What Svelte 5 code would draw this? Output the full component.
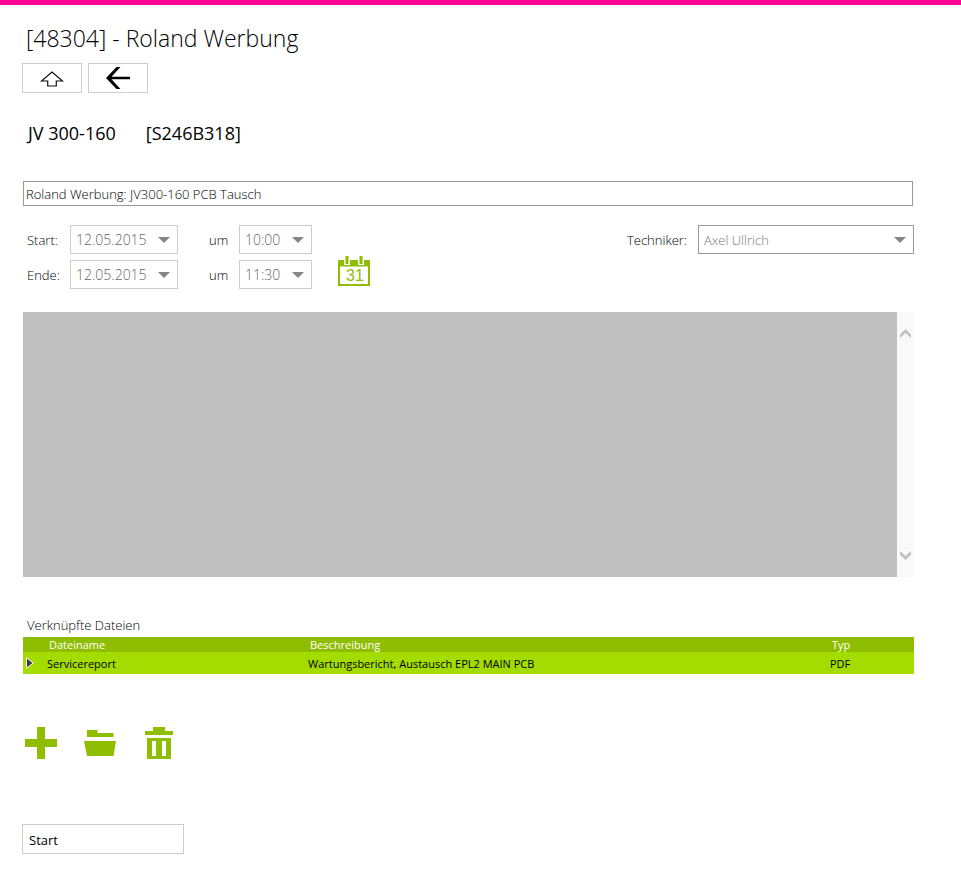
<script>
  const appointment = [
    { id: 'start', label: 'Start:', date: '12.05.2015', time: '10:00' },
    { id: 'end', label: 'Ende:', date: '12.05.2015', time: '11:30' }
  ];
  const files = [
    { name: 'Servicereport', description: 'Wartungsbericht, Austausch EPL2 MAIN PCB', type: 'PDF' }
  ];
  let subject = $state('Roland Werbung: JV300-160 PCB Tausch');
</script>

<main>
  <h1>[48304] - Roland Werbung</h1>

  <nav>
    <button class="box" aria-label="Startseite">
      <svg class="home" width="24" height="16" viewBox="0 0 24 16" fill="none" stroke="#111" stroke-width="1.2">
        <path d="M12 1 L22.500 10 H16.300 V15 H7.700 V10 H1.500 Z" />
      </svg>
    </button>
    <button class="box" aria-label="Zurück">
      <svg width="24" height="22" viewBox="0 0 24 22" fill="#000">
        <path d="M10.500 0 H14.500 L5.500 9.700 H24 V12.300 H5.500 L14.500 22 H10.500 L0 11 Z" />
      </svg>
    </button>
  </nav>

  <h2><span>JV 300-160</span><span>[S246B318]</span></h2>

  <input class="subject" type="text" aria-label="Betreff" bind:value={subject} />

  <section class="details">
    <div class="times">
      {#each appointment as row}
        <div class="row">
          <label class="name" for="{row.id}-date">{row.label}</label>
          <span class="pick date">
            <select id="{row.id}-date" disabled><option>{row.date}</option></select>
          </span>
          <label class="at" for="{row.id}-time">um</label>
          <span class="pick time">
            <select id="{row.id}-time" disabled><option>{row.time}</option></select>
          </span>
        </div>
      {/each}
    </div>
    <button class="calendar" aria-label="Kalender">
      <svg width="32" height="30" viewBox="0 0 32 30">
        <path fill="#8fbe00" fill-rule="evenodd" d="M0 4 H32 V30 H0 Z M2 10.500 V28 H30 V10.500 Z" />
        <path fill="#fff" d="M6 3 H12 V9 H6 Z M20 3 H26 V9 H20 Z" />
        <path fill="#8fbe00" d="M7.500 0 H10.500 V8 H7.500 Z M21.500 0 H24.500 V8 H21.500 Z" />
        <text x="17" y="25" text-anchor="middle" fill="#8fbe00">31</text>
      </svg>
    </button>
    <div class="technician">
      <label for="technician">Techniker:</label>
      <span class="pick person">
        <select id="technician" disabled><option>Axel Ullrich</option></select>
      </span>
    </div>
  </section>

  <div class="notes">
    <textarea aria-label="Notizen" disabled></textarea>
    <div class="scroll">
      <button aria-label="Nach oben">
        <svg width="12" height="9" viewBox="0 0 12 9"><path d="M0 5.500 L5.500 0 L11 5.500 V9 L5.500 4 L0 9 Z" fill="#bfbfbf" /></svg>
      </button>
      <button aria-label="Nach unten">
        <svg width="12" height="9" viewBox="0 0 12 9"><path d="M0 3.500 L5.500 9 L11 3.500 V0 L5.500 5 L0 0 Z" fill="#bfbfbf" /></svg>
      </button>
    </div>
  </div>

  <table>
    <caption>Verknüpfte Dateien</caption>
    <colgroup>
      <col class="mark" />
      <col class="file" />
      <col />
      <col class="type" />
    </colgroup>
    <thead>
      <tr>
        <th></th>
        <th>Dateiname</th>
        <th>Beschreibung</th>
        <th>Typ</th>
      </tr>
    </thead>
    <tbody>
      {#each files as file}
        <tr>
          <td>
            <svg class="pointer" width="8" height="12" viewBox="0 0 8 12"><path d="M0.500 0.800 L7.200 6 L0.500 11.200 Z" fill="#3b3b45" stroke="#fff" /></svg>
          </td>
          <td>{file.name}</td>
          <td>{file.description}</td>
          <td>{file.type}</td>
        </tr>
      {/each}
    </tbody>
  </table>

  <div class="actions">
    <button aria-label="Hinzufügen">
      <svg width="32" height="32" viewBox="0 0 32 32" fill="#8fbe00"><path d="M12 0 H20 V12 H32 V20 H20 V32 H12 V20 H0 V12 H12 Z" /></svg>
    </button>
    <button aria-label="Öffnen">
      <svg width="32" height="32" viewBox="0 0 32 32" fill="#8fbe00"><path d="M3 3 H13.500 V6 H29.500 V10 H3 Z M0 14 H32 L29.500 29 H3 Z" /></svg>
    </button>
    <button aria-label="Löschen">
      <svg width="32" height="32" viewBox="0 0 32 32" fill="#8fbe00" fill-rule="evenodd"><path d="M10 0 H22 V4 H30 V8 H2 V4 H10 Z M4 11 H28 V32 H4 Z M9 14 V29 H13 V14 Z M19 14 V29 H23 V14 Z" /></svg>
    </button>
  </div>

  <button class="box start">Start</button>
</main>

<style>
  :global(body) {
    margin: 0;
    background: #fff;
  }

  main {
    box-sizing: border-box;
    min-height: 100vh;
    padding: 17px 47px 21px 23px;
    border-top: 5px solid #ff0097;
    color: #000;
    font: 300 13px/20px 'Open Sans', 'Noto Sans', sans-serif;
  }

  button,
  input,
  select,
  textarea {
    box-sizing: border-box;
    margin: 0;
    padding: 0;
    border: 0;
    border-radius: 0;
    background: none;
    color: inherit;
    font: inherit;
  }

  svg {
    display: block;
  }

  h1 {
    margin: 0;
    padding-left: 3px;
    font-size: 23px;
    font-weight: 300;
    line-height: 32px;
  }

  nav {
    display: flex;
    gap: 6px;
    margin: 9px 0 0 -1px;
  }

  .box {
    display: flex;
    align-items: center;
    justify-content: center;
    width: 60px;
    height: 30px;
    border: 1px solid #ccc;
  }

  .home {
    margin-top: 2px;
  }

  h2 {
    display: flex;
    gap: 30px;
    margin: 28px 0 0;
    padding-left: 5px;
    font-size: 18px;
    font-weight: 400;
    line-height: 24px;
  }

  .subject {
    display: block;
    width: calc(100% - 1px);
    height: 25px;
    margin-top: 36px;
    padding: 0 2px;
    border: 1px solid #999;
  }

  .details {
    display: flex;
    align-items: flex-start;
    margin-top: 19px;
  }

  .times {
    display: flex;
    flex-direction: column;
    gap: 6px;
  }

  .row,
  .technician {
    display: flex;
    align-items: center;
    height: 29px;
  }

  .name {
    width: 47px;
    padding-left: 4px;
    box-sizing: border-box;
  }

  .at {
    width: 30px;
    margin-left: 31px;
  }

  .pick {
    position: relative;
    display: block;
    height: 29px;
  }

  .pick::after {
    content: '';
    position: absolute;
    top: 12px;
    right: 8px;
    border: 6px solid transparent;
    border-top-color: #868686;
    border-bottom: 0;
    pointer-events: none;
  }

  .pick select {
    width: 100%;
    height: 100%;
    padding: 0 5px;
    border: 1px solid #ccc;
    appearance: none;
    color: #666;
    opacity: 1;
  }

  .date {
    width: 108px;
  }

  .time {
    width: 73px;
  }

  .date select,
  .time select {
    font-size: 14px;
  }

  .person {
    width: 216px;
  }

  .person select {
    border-color: #999;
    color: #777;
  }

  .calendar {
    margin: 31px 0 0 26px;
  }

  .calendar text {
    font: 400 16px 'Liberation Sans', sans-serif;
  }

  .technician {
    gap: 11px;
    margin-left: auto;
  }

  .notes {
    display: flex;
    height: 265px;
    margin-top: 23px;
  }

  textarea {
    flex: 1;
    background: #c0c0c0;
    resize: none;
  }

  .scroll {
    display: flex;
    flex-direction: column;
    justify-content: space-between;
    align-items: center;
    width: 17px;
    padding: 17px 0;
    box-sizing: border-box;
    background: #f9f9f9;
  }

  table {
    width: 100%;
    margin-top: 38px;
    border-collapse: collapse;
    table-layout: fixed;
    font-size: 11px;
    font-weight: 400;
  }

  caption {
    padding: 0 0 2px 4px;
    font-size: 13px;
    font-weight: 300;
    text-align: left;
  }

  th,
  td {
    padding: 0;
    text-align: left;
    font-weight: 400;
  }

  th {
    height: 15px;
    padding-left: 2px;
    background: #8fbe00;
    color: #fff;
    line-height: 15px;
  }

  td {
    padding-top: 2px;
    background: #a5dc00;
    line-height: 20px;
  }

  .mark {
    width: 24px;
  }

  .file {
    width: 261px;
  }

  .type {
    width: 84px;
  }

  .pointer {
    margin: 0 0 2px 3px;
  }

  .actions {
    display: flex;
    gap: 27px;
    margin: 53px 0 0 2px;
  }

  .start {
    justify-content: flex-start;
    width: 162px;
    margin: 65px 0 0 -1px;
    padding: 2px 0 0 6px;
    font-weight: 400;
  }
</style>
